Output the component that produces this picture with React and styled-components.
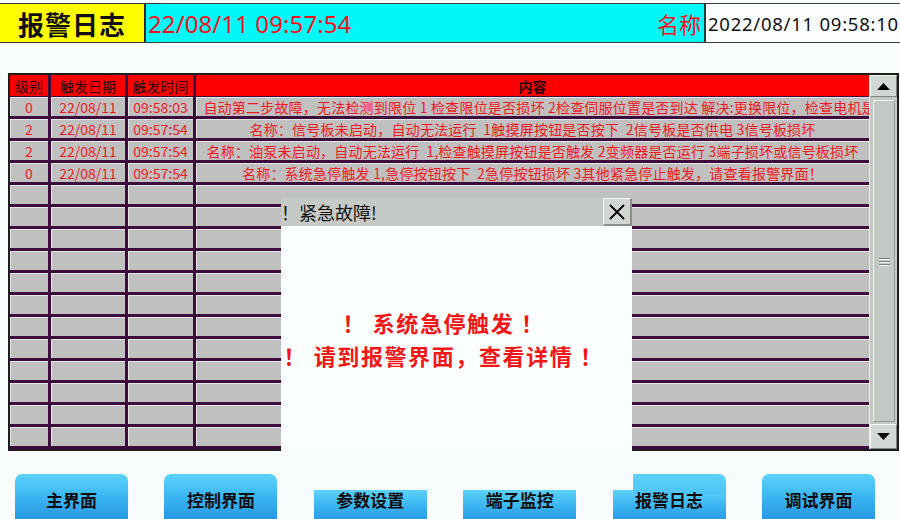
import React from "react";
import styled, { createGlobalStyle } from "styled-components";

const GlobalStyle = createGlobalStyle`
  html, body {
    margin: 0;
    padding: 0;
    background: #f8fcfc;
    overflow: hidden;
  }
  body {
    font-family: "Noto Sans CJK SC", "Noto Sans", sans-serif;
  }
`;

const rows = [
  {
    level: "0",
    date: "22/08/11",
    time: "09:58:03",
    text: "名称：自动第二步故障，无法检测到限位 1 检查限位是否损坏 2检查伺服位置是否到达 解决:更换限位，检查电机是否正",
  },
  {
    level: "2",
    date: "22/08/11",
    time: "09:57:54",
    text: "名称：信号板未启动，自动无法运行  1触摸屏按钮是否按下  2信号板是否供电 3信号板损坏",
  },
  {
    level: "2",
    date: "22/08/11",
    time: "09:57:54",
    text: "名称：油泵未启动，自动无法运行  1,检查触摸屏按钮是否触发 2变频器是否运行 3端子损坏或信号板损坏",
  },
  {
    level: "0",
    date: "22/08/11",
    time: "09:57:54",
    text: "名称：系统急停触发 1,急停按钮按下  2急停按钮损坏 3其他紧急停止触发，请查看报警界面！",
  },
];

const TOTAL_ROWS = 16;

const navButtons = [
  { label: "主界面", shape: "round" },
  { label: "控制界面", shape: "round" },
  { label: "参数设置", shape: "cut" },
  { label: "端子监控", shape: "cut" },
  { label: "报警日志", shape: "notch" },
  { label: "调试界面", shape: "round" },
];

export default function App() {
  const body = [];
  for (let i = 0; i < TOTAL_ROWS; i++) body.push(rows[i] || null);

  return (
    <Screen>
      <GlobalStyle />
      <TopBar>
        <TitleBox>报警日志</TitleBox>
        <InfoBox>
          <AlarmTime>22/08/11 09:57:54</AlarmTime>
          <NameLabel>名称</NameLabel>
        </InfoBox>
        <ClockBox>2022/08/11 09:58:10</ClockBox>
      </TopBar>

      <TableFrame>
        <TableMain>
          <Row $head>
            <Cell $w={41} $head>级别</Cell>
            <Cell $w={77} $head>触发日期</Cell>
            <Cell $w={68} $head>触发时间</Cell>
            <Cell $grow $head $bold>内容</Cell>
          </Row>
          {body.map((r, i) => (
            <Row key={i}>
              <Cell $w={41}>{r && r.level}</Cell>
              <Cell $w={77}>{r && r.date}</Cell>
              <Cell $w={68}>{r && r.time}</Cell>
              <Cell $grow $wide>{r && r.text}</Cell>
            </Row>
          ))}
        </TableMain>
        <ScrollBar>
          <ScrollButton>
            <svg width="13" height="7" viewBox="0 0 13 7">
              <polygon points="0,7 6.5,0 13,7" fill="#000" />
            </svg>
          </ScrollButton>
          <ScrollTrack>
            <Thumb>
              <Grip />
              <Grip />
              <Grip />
            </Thumb>
          </ScrollTrack>
          <ScrollButton $tall>
            <svg width="13" height="7" viewBox="0 0 13 7">
              <polygon points="0,0 13,0 6.5,7" fill="#000" />
            </svg>
          </ScrollButton>
        </ScrollBar>

        <Dialog>
          <DialogHead>
            <DialogTitle>！紧急故障!</DialogTitle>
            <CloseButton>
              <svg width="18" height="18" viewBox="0 0 18 18">
                <path d="M2 2 L16 16 M16 2 L2 16" stroke="#000" strokeWidth="1.8" />
              </svg>
            </CloseButton>
          </DialogHead>
          <DialogBody>
            <Warning>！ 系统急停触发 ！</Warning>
            <Warning>！ 请到报警界面，查看详情 ！</Warning>
          </DialogBody>
        </Dialog>
      </TableFrame>

      <NavRow>
        {navButtons.map((b) => (
          <NavButton key={b.label} $shape={b.shape}>
            {b.label}
          </NavButton>
        ))}
      </NavRow>
    </Screen>
  );
}

const Screen = styled.div`
  width: 900px;
  height: 519px;
  overflow: hidden;
  background: #f8fcfc;
`;

const TopBar = styled.div`
  margin-top: 3px;
  height: 38px;
  display: flex;
  border-top: 1px solid #3a3a3a;
  border-bottom: 1px solid #3a3a3a;
`;

const TitleBox = styled.div`
  width: 144px;
  background: #ffff00;
  border-right: 2px solid #2a2a3a;
  display: flex;
  align-items: center;
  justify-content: center;
  font-size: 26px;
  font-weight: 700;
  color: #111;
  letter-spacing: 1px;
`;

const InfoBox = styled.div`
  width: 560px;
  background: #00f8f8;
  border-right: 2px solid #2a3a3a;
  display: flex;
  align-items: center;
  justify-content: space-between;
  padding: 0 3px 0 2px;
  box-sizing: border-box;
`;

const AlarmTime = styled.span`
  font-family: "Noto Sans", sans-serif;
  font-size: 24px;
  letter-spacing: 0.1px;
  color: #f4121e;
`;

const NameLabel = styled.span`
  font-size: 22px;
  color: #f4121e;
`;

const ClockBox = styled.div`
  flex: 1;
  background: #fcfefe;
  display: flex;
  align-items: center;
  padding-left: 2px;
  font-family: "Noto Sans", sans-serif;
  font-size: 18.5px;
  letter-spacing: 0.75px;
  color: #111;
  white-space: nowrap;
`;

const TableFrame = styled.div`
  position: relative;
  margin: 30px 0 0 8px;
  width: 891px;
  box-sizing: border-box;
  border: 2px solid #1c1c1c;
  display: flex;
  background: #c0c0c0;
`;

const TableMain = styled.div`
  width: 859px;
  display: flex;
  flex-direction: column;
`;

const Row = styled.div`
  display: flex;
  height: 22px;
  box-sizing: border-box;
  border-bottom: ${(p) => (p.$head ? "1px" : "3px")} solid #3c0c3c;
  background: ${(p) => (p.$head ? "#ff0000" : "#c0c0c0")};
`;

const Cell = styled.div`
  box-sizing: border-box;
  ${(p) => (p.$grow ? "flex: 1; min-width: 0;" : `width: ${p.$w}px; flex: none;`)}
  border-right: ${(p) => (p.$grow ? "0" : "3px solid #3c0c3c")};
  box-shadow: ${(p) => (p.$head ? "none" : "inset 1px 1px 0 #e6e6e6")};
  display: flex;
  align-items: center;
  justify-content: center;
  overflow: hidden;
  white-space: pre;
  font-size: 14px;
  letter-spacing: ${(p) => (p.$wide ? "0.2px" : "0")};
  font-weight: ${(p) => (p.$bold ? 700 : 400)};
  color: ${(p) => (p.$head ? "#2a0006" : "#f41a22")};
  font-family: "Noto Sans CJK SC", "Noto Sans", sans-serif;
`;

const ScrollBar = styled.div`
  width: 28px;
  display: flex;
  flex-direction: column;
  background: #c4c8c4;
  border-left: 1px solid #e8ece8;
  box-sizing: border-box;
`;

const ScrollButton = styled.div`
  height: ${(p) => (p.$tall ? 25 : 22)}px;
  box-sizing: border-box;
  background: #d4d8d4;
  border-top: 1px solid #f4f8f4;
  border-left: 1px solid #f4f8f4;
  border-bottom: 1px solid #808480;
  border-right: 1px solid #808480;
  display: flex;
  align-items: center;
  justify-content: center;
`;

const ScrollTrack = styled.div`
  flex: 1;
  padding: 3px 2px 2px 3px;
  display: flex;
`;

const Thumb = styled.div`
  flex: 1;
  background: #c4c8c4;
  border-top: 1px solid #eef2ee;
  border-left: 1px solid #eef2ee;
  border-bottom: 1px solid #9a9e9a;
  border-right: 1px solid #9a9e9a;
  display: flex;
  flex-direction: column;
  align-items: center;
  justify-content: center;
  gap: 2px;
`;

const Grip = styled.div`
  width: 11px;
  height: 1px;
  background: #7c807c;
  box-shadow: 0 1px 0 #f0f4f0;
`;

const Dialog = styled.div`
  position: absolute;
  left: 271px;
  top: 123px;
  width: 351px;
  height: 254px;
  display: flex;
  flex-direction: column;
  background: #fbfefe;
`;

const DialogHead = styled.div`
  height: 28px;
  display: flex;
`;

const DialogTitle = styled.div`
  flex: 1;
  background: #c6cac6;
  display: flex;
  align-items: center;
  font-size: 18px;
  color: #151515;
`;

const CloseButton = styled.div`
  width: 29px;
  box-sizing: border-box;
  background: #d2d6d2;
  border-top: 1px solid #f4f8f4;
  border-left: 1px solid #f4f8f4;
  border-bottom: 2px solid #8a8e8a;
  border-right: 2px solid #8a8e8a;
  display: flex;
  align-items: center;
  justify-content: center;
`;

const DialogBody = styled.div`
  flex: 1;
  display: flex;
  flex-direction: column;
  align-items: center;
  padding: 80px 26px 0 0;
  gap: 1px;
`;

const Warning = styled.div`
  font-size: 22px;
  font-weight: 700;
  line-height: 32px;
  color: #f41616;
  white-space: pre;
  letter-spacing: 1.6px;
`;

const NavRow = styled.div`
  margin-top: 23px;
  padding-left: 15px;
  display: grid;
  grid-template-columns: repeat(6, 113px);
  column-gap: 36.4px;
`;

const blue = "linear-gradient(180deg, #5cd2fa 0%, #3cb6f2 45%, #2292e2 100%)";

const NavButton = styled.div`
  position: relative;
  height: 50px;
  padding-top: 12px;
  box-sizing: border-box;
  text-align: center;
  font-size: 17px;
  font-weight: 700;
  color: #0c0c0c;
  line-height: 28px;
  border-radius: ${(p) => (p.$shape === "round" ? "7px 7px 0 0" : "0")};
  background: ${(p) =>
    p.$shape === "round" ? blue : `${blue} 0 16px / 100% 34px no-repeat`};
  z-index: 0;

  &::before {
    content: "";
    display: ${(p) => (p.$shape === "notch" ? "block" : "none")};
    position: absolute;
    left: 20px;
    right: 0;
    top: 0;
    height: 20px;
    border-radius: 0 7px 0 0;
    background: linear-gradient(180deg, #5cd2fa 0%, #4cc4f6 100%);
    z-index: -1;
  }
`;
